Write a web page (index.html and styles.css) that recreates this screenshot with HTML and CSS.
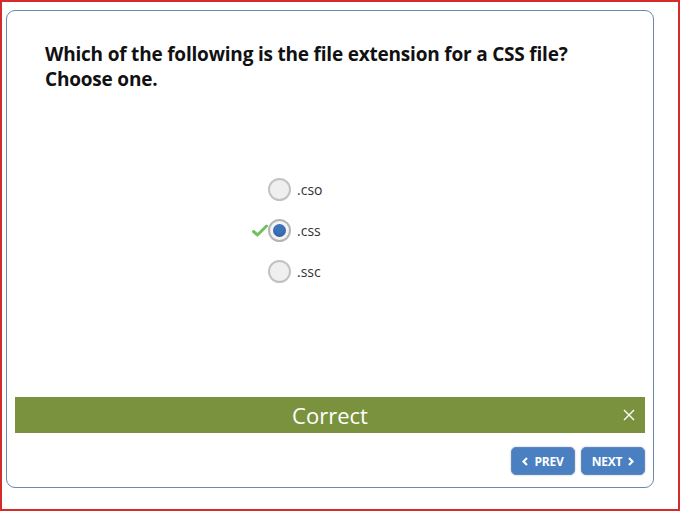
FILE: index.html
```html
<!DOCTYPE html>
<html>
<head>
<meta charset="utf-8">
<link rel="stylesheet" href="styles.css">
</head>
<body>
<div class="frame">
  <div class="card">
    <h1 class="question">Which of the following is the file extension for a CSS file?<br>Choose one.</h1>
    <div class="options">
      <label class="option">
        <span class="mark"></span>
        <span class="radio"></span>
        <span class="text">.cso</span>
      </label>
      <label class="option">
        <span class="mark"><svg width="16" height="13" viewBox="0 0 16 13"><path d="M1.5 7.5 L5.5 11 L14.5 2" fill="none" stroke="#74c061" stroke-width="3" stroke-linecap="round" stroke-linejoin="round"/></svg></span>
        <span class="radio checked"><span class="dot"></span></span>
        <span class="text">.css</span>
      </label>
      <label class="option">
        <span class="mark"></span>
        <span class="radio"></span>
        <span class="text">.ssc</span>
      </label>
    </div>
    <div class="feedback">
      <span class="feedback-text">Correct</span>
      <span class="close"><svg width="12" height="12" viewBox="0 0 12 12"><path d="M1 1 L11 11 M11 1 L1 11" stroke="#fff" stroke-width="1.4"/></svg></span>
    </div>
    <div class="nav">
      <button class="btn"><svg class="chev" width="6" height="9" viewBox="0 0 6 9"><path d="M5 1 L1.5 4.5 L5 8" fill="none" stroke="#fff" stroke-width="2.2"/></svg>PREV</button>
      <button class="btn">NEXT<svg class="chev right" width="6" height="9" viewBox="0 0 6 9"><path d="M1 1 L4.5 4.5 L1 8" fill="none" stroke="#fff" stroke-width="2.2"/></svg></button>
    </div>
  </div>
</div>
</body>
</html>
```
FILE: styles.css
```css
html, body {
  margin: 0;
  padding: 0;
  background: #fff;
}
body {
  width: 680px;
  height: 511px;
  overflow: hidden;
  font-family: "Open Sans", "Liberation Sans", sans-serif;
}
.frame {
  box-sizing: border-box;
  width: 680px;
  height: 511px;
  border: 2px solid #d62b2b;
  padding: 8px 24px 0 4px;
}
.card {
  box-sizing: border-box;
  width: 648px;
  height: 478px;
  border: 1px solid #6b88ad;
  border-radius: 9px;
  padding: 31px 8px 0 8px;
  display: flex;
  flex-direction: column;
}
.question {
  margin: 0 0 0 30px;
  font-size: 19px;
  font-weight: 700;
  line-height: 25px;
  color: #111;
  letter-spacing: -0.2px;
}
.options {
  margin-top: 86px;
  display: flex;
  flex-direction: column;
  gap: 18px;
  padding-left: 233px;
  height: 219px;
}
.option {
  display: flex;
  align-items: center;
  height: 23px;
}
.mark {
  width: 20px;
  height: 13px;
  display: flex;
  justify-content: flex-end;
}
.radio {
  box-sizing: border-box;
  width: 23px;
  height: 23px;
  border-radius: 50%;
  border: 2px solid #c2c2c2;
  background: #efefef;
  display: flex;
  align-items: center;
  justify-content: center;
}
.radio.checked {
  background: #f4f4f4;
  border-color: #b5b5b5;
}
.dot {
  width: 13px;
  height: 13px;
  border-radius: 50%;
  background: #3d73ba;
  box-shadow: inset 0 -2px 3px rgba(0,0,0,0.15);
}
.text {
  margin-left: 6px;
  font-size: 14px;
  color: #333;
}
.feedback {
  position: relative;
  height: 36px;
  background: #7a923d;
  display: flex;
  align-items: center;
  justify-content: center;
}
.feedback-text {
  color: #fff;
  font-size: 22px;
  font-weight: 400;
}
.close {
  position: absolute;
  right: 10px;
  top: 12px;
  display: flex;
}
.nav {
  display: flex;
  justify-content: flex-end;
  gap: 6px;
  margin-top: 14px;
}
.btn {
  box-sizing: border-box;
  height: 28px;
  width: 64px;
  border: 1px solid #5c88c4;
  border-radius: 5px;
  background: #4a7fc2;
  box-shadow: 0 0 2px rgba(0,0,0,0.3);
  color: #fff;
  font-family: "Open Sans", sans-serif;
  font-weight: 700;
  font-size: 12px;
  letter-spacing: -0.2px;
  display: flex;
  align-items: center;
  justify-content: center;
  gap: 6px;
  padding: 0;
}
```
